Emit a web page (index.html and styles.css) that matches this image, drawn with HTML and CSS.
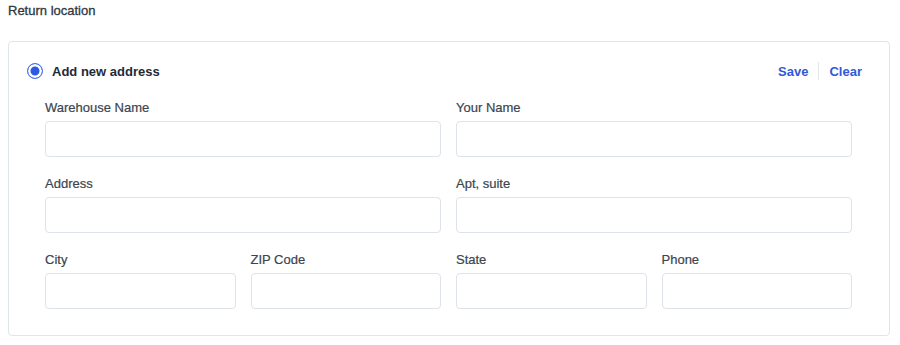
FILE: index.html
```html
<!DOCTYPE html>
<html lang="en">
<head>
  <meta charset="UTF-8" />
  <title>Return location</title>
  <link rel="stylesheet" href="styles.css">
</head>
<body>
  <h2 class="section-title">Return location</h2>

  <div class="card">
    <div class="card-head">
      <label class="radio-option">
        <span class="radio"></span>
        <span class="radio-text">Add new address</span>
      </label>
      <div class="actions">
        <a href="#" class="action">Save</a>
        <span class="divider"></span>
        <a href="#" class="action">Clear</a>
      </div>
    </div>

    <form class="address-form">
      <div class="field wide">
        <label>Warehouse Name</label>
        <input type="text" />
      </div>
      <div class="field wide">
        <label>Your Name</label>
        <input type="text" />
      </div>
      <div class="field wide">
        <label>Address</label>
        <input type="text" />
      </div>
      <div class="field wide">
        <label>Apt, suite</label>
        <input type="text" />
      </div>
      <div class="field">
        <label>City</label>
        <input type="text" />
      </div>
      <div class="field">
        <label>ZIP Code</label>
        <input type="text" />
      </div>
      <div class="field">
        <label>State</label>
        <input type="text" />
      </div>
      <div class="field">
        <label>Phone</label>
        <input type="text" />
      </div>
    </form>
  </div>
</body>
</html>
```

FILE: styles.css
```css
/* Base */
* {
  margin: 0;
  padding: 0;
  box-sizing: border-box;
  font-family: 'Liberation Sans', Arial, sans-serif;
}

body {
  background: #fff;
  padding: 3px 10px 0 8px;
  color: #3b4651;
}

/* Section title */
.section-title {
  font-size: 13px;
  font-weight: normal;
  color: #2e3842;
  line-height: 16px;
  -webkit-text-stroke: 0.3px #2e3842;
}

/* Card */
.card {
  margin-top: 22px;
  border: 1px solid #dfe6ea;
  border-radius: 4px;
  padding: 19px 18px 26px 18px;
}

.card-head {
  display: flex;
  align-items: center;
  justify-content: space-between;
  height: 20px;
  padding-right: 9px;
}

.radio-option {
  display: flex;
  align-items: center;
  gap: 9px;
}

.radio {
  width: 16px;
  height: 16px;
  border-radius: 50%;
  border: 1.5px solid #4b73ee;
  background: #2c58e4;
  box-shadow: inset 0 0 0 2.5px #fff;
}

.radio-text {
  font-size: 13px;
  font-weight: bold;
  color: #1f2a35;
}

/* Save / Clear */
.actions {
  display: flex;
  align-items: center;
  gap: 10px;
}

.action {
  font-size: 13px;
  font-weight: bold;
  color: #3158dc;
  text-decoration: none;
}

.divider {
  width: 1px;
  height: 18px;
  background: #e3e8ec;
}

/* Form grid */
.address-form {
  display: grid;
  grid-template-columns: repeat(4, minmax(0, 1fr));
  column-gap: 15px;
  row-gap: 18px;
  margin: 18px 19px 0 18px;
}

.field {
  display: flex;
  flex-direction: column;
  gap: 5px;
  min-width: 0;
}

.field.wide {
  grid-column: span 2;
}

.field label {
  padding-top: 1px;
  font-size: 13px;
  line-height: 16px;
  color: #3a4550;
  -webkit-text-stroke: 0.2px #3a4550;
}

.field input {
  width: 100%;
  min-width: 0;
  height: 36px;
  border: 1px solid #dde3e8;
  border-radius: 4px;
  padding: 0 10px;
  font-size: 13px;
  background: #fff;
}

.field input:focus {
  outline: none;
  border-color: #3158dc;
}
```
